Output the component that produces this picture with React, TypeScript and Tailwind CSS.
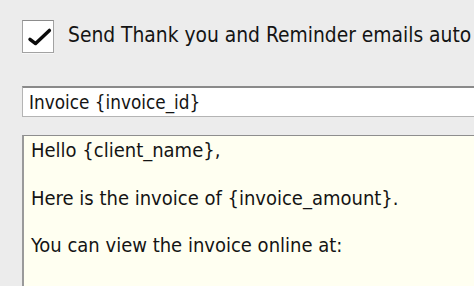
import React from "react";

const font = { fontFamily: '"DejaVu Sans Condensed", "DejaVu Sans", sans-serif' };

export default function App() {
  return (
    <div
      className="w-[474px] h-[286px] overflow-hidden bg-[#ececec] pl-[22px] pt-[20px] text-[#141414] font-stretch-condensed"
      style={font}
    >
      <div className="flex items-start">
        <div className="relative w-[32px] h-[33px] shrink-0 bg-white border border-[#a2a2a2] border-t-[#8c8c8c] shadow-[0_1px_0_rgba(255,255,255,0.6)]">
          <svg className="absolute left-0 top-0" width="32" height="33" viewBox="0 0 32 33">
            <path
              d="M7 18.3 L12.6 22.6 L26.4 9.4"
              fill="none"
              stroke="#0a0a0a"
              strokeWidth="3.4"
              strokeLinecap="round"
              strokeLinejoin="round"
            />
          </svg>
        </div>
        <div className="ml-[14px] text-[20.8px] leading-[30px] whitespace-nowrap">
          Send Thank you and Reminder emails auto
        </div>
      </div>

      <div className="mt-[33px] w-[600px] h-[31px] bg-white border border-[#b4b4b4] border-t-[#8a8a8a] border-t-2 pl-[6px] pt-[2px] text-[18.8px] leading-[26px] whitespace-nowrap">
        Invoice {"{invoice_id}"}
      </div>

      <div className="mt-[18px] w-[600px] h-[200px] bg-[#fffff1] border border-[#a8a8a8] border-t-[#8e8e8e] border-l-2 border-l-[#9a9a9a] pl-[7px] pt-[3px] text-[20px] leading-[23.75px] whitespace-nowrap">
        <div>Hello {"{client_name}"},</div>
        <div className="h-[23.75px]" />
        <div>Here is the invoice of {"{invoice_amount}"}.</div>
        <div className="h-[23.75px]" />
        <div>You can view the invoice online at:</div>
      </div>
    </div>
  );
}
